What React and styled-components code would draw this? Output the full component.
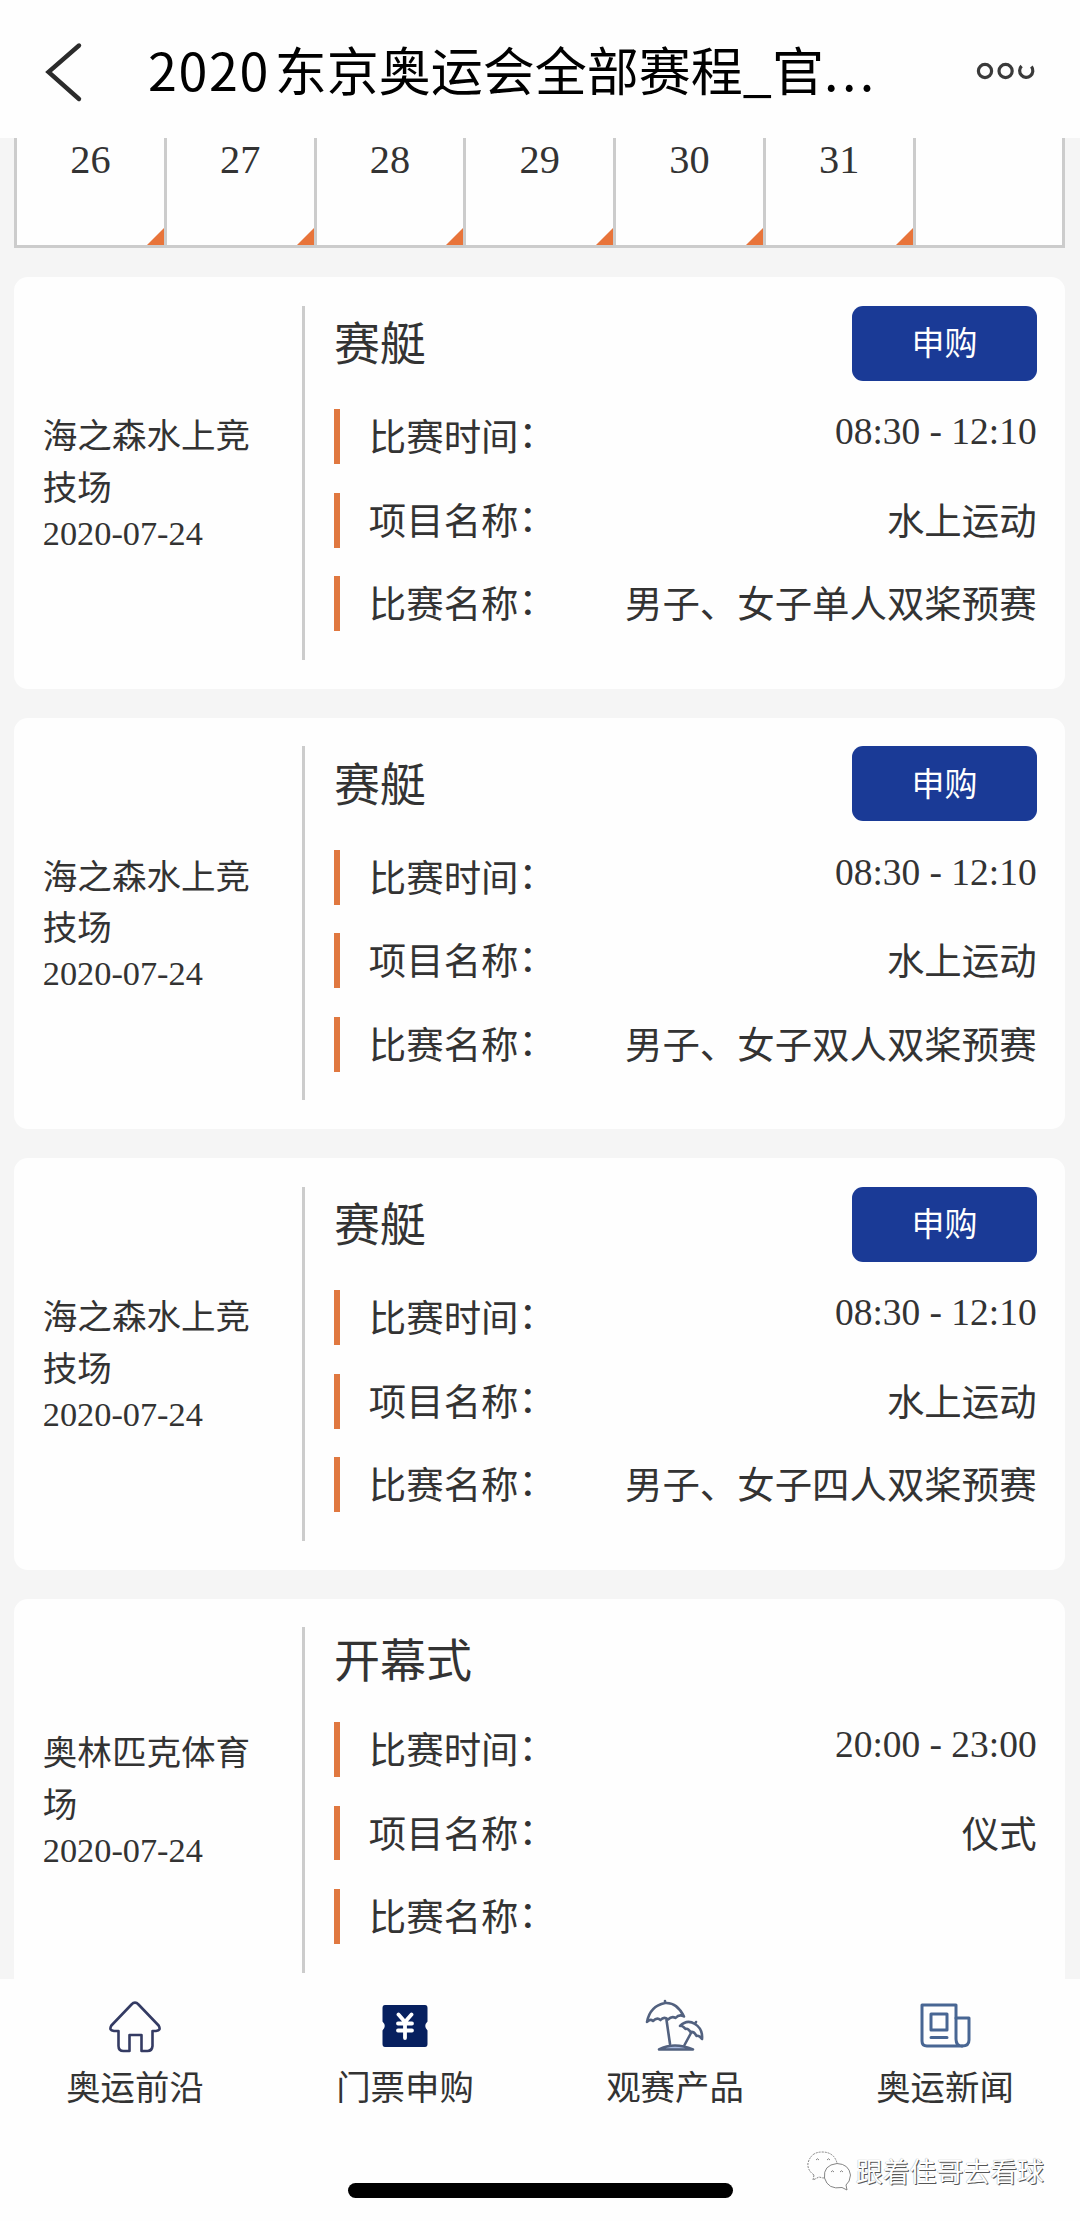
import React from "react";
import styled, { createGlobalStyle } from "styled-components";

const GlobalStyle = createGlobalStyle`
  * {
    box-sizing: border-box;
  }
  body {
    margin: 0;
    background: #ffffff;
    color: #333333;
    font-family: "Liberation Serif", "Noto Sans CJK SC", serif;
  }
`;

const Page = styled.div`
  position: relative;
  display: flex;
  flex-direction: column;
  width: 1080px;
  height: 2221px;
  overflow: hidden;
  background: #fefefe;
`;

const Header = styled.header`
  display: flex;
  align-items: center;
  flex-shrink: 0;
  height: 138px;
  padding: 6px 38px 0 44px;
  background: #fefefe;
  color: #000000;
`;

const BackIcon = styled.svg`
  width: 40px;
  height: 62px;
`;

const PageTitle = styled.h1`
  flex: 1;
  margin: 0 0 0 64px;
  padding-bottom: 7px;
  font-family: "Noto Sans CJK SC", sans-serif;
  font-size: 52px;
  font-weight: 400;
  line-height: 76px;
  white-space: nowrap;
`;

const Year = styled.span`
  margin-right: 5px;
  letter-spacing: 1.6px;
`;

const Dots = styled.span`
  letter-spacing: 3.5px;
`;

const MoreIcon = styled.svg`
  width: 66px;
  height: 24px;
`;

const Content = styled.main`
  flex: 1;
  min-height: 0;
  padding: 0 14.6px 0 14px;
  overflow: hidden;
  background: #f5f5f5;
`;

const Calendar = styled.div`
  display: grid;
  grid-template-columns: repeat(7, 1fr);
  height: 110px;
  margin-bottom: 29px;
  border: solid #cccccc;
  border-width: 0 0 3px 3px;
  background: #fefefe;
`;

const Day = styled.div`
  position: relative;
  border-right: 3px solid #cccccc;
  font-size: 40.3px;
  line-height: 44px;
  text-align: center;
`;

const Corner = styled.i`
  position: absolute;
  right: 0;
  bottom: 0;
  border-bottom: 17px solid #e8743a;
  border-left: 17px solid transparent;
`;

const Card = styled.section`
  display: flex;
  margin-bottom: 28.9px;
  padding: 28.8px;
  border-radius: 14px;
  background: #fefefe;
`;

const Place = styled.div`
  display: flex;
  flex-direction: column;
  justify-content: center;
  width: 259.4px;
  padding: 0 45px 4px 0;
  font-size: 34.56px;
`;

const Venue = styled.div`
  font-family: "Noto Sans CJK SC", sans-serif;
  line-height: 51.8px;
`;

const MatchDate = styled.div`
  font-size: 34.3px;
  line-height: 42px;
`;

const Detail = styled.div`
  flex: 1;
  padding-left: 28.8px;
  border-left: 3px solid #cccccc;
`;

const DetailHead = styled.div`
  display: flex;
  align-items: center;
  justify-content: space-between;
  min-height: 66px;
  margin-bottom: 28.8px;
`;

const Sport = styled.h2`
  margin: 0;
  padding-bottom: 5px;
  font-family: "Noto Sans CJK SC", sans-serif;
  font-size: 46px;
  font-weight: 400;
  line-height: 61px;
`;

const BuyButton = styled.button`
  width: 184.4px;
  height: 74.8px;
  padding: 0 0 4px;
  border: none;
  border-radius: 11px;
  background: #1a3a96;
  color: #ffffff;
  font-family: "Noto Sans CJK SC", sans-serif;
  font-size: 33px;
  line-height: 70px;
`;

const Row = styled.div`
  display: flex;
  justify-content: space-between;
  height: 54.7px;
  margin-bottom: 28.8px;
  padding-left: 28.8px;
  border-left: 6px solid #e07840;
  font-family: "Noto Sans CJK SC", sans-serif;
  font-size: 37.44px;
  line-height: 52px;
`;

/* the full-width colon sits a little above the baseline */
const Colon = styled.span`
  position: relative;
  top: -3px;
`;

const Time = styled.span`
  font-family: "Liberation Serif", serif;
  line-height: 45px;
`;

const TabBar = styled.nav`
  display: grid;
  grid-template-columns: repeat(4, 1fr);
  flex-shrink: 0;
  height: 184px;
  padding-top: 16px;
  background: #fefefe;
`;

const Tab = styled.a`
  display: flex;
  flex-direction: column;
  align-items: center;
  font-family: "Noto Sans CJK SC", sans-serif;
  font-size: 34.4px;
  line-height: 50px;
`;

const TabIcon = styled.svg`
  width: 64px;
  height: 64px;
  margin-bottom: 1px;
  fill: none;
  stroke: ${(props) => props.$color};
  stroke-width: 2.6;
  stroke-linecap: round;
  stroke-linejoin: round;
`;

const HomeArea = styled.div`
  display: flex;
  justify-content: center;
  flex-shrink: 0;
  height: 58px;
  padding-top: 20px;
  background: #fefefe;
`;

const HomeBar = styled.div`
  width: 385px;
  height: 15px;
  border-radius: 8px;
  background: #000000;
`;

const Watermark = styled.div`
  position: absolute;
  right: 36px;
  bottom: 30px;
  display: flex;
  align-items: center;
  gap: 4px;
  color: #ffffff;
  font-family: "Noto Sans CJK SC", sans-serif;
  font-size: 26.9px;
  line-height: 40px;
  text-shadow: 1px 1px 0 #555555, 0 0 1px #888888;
`;

const WechatIcon = styled.svg`
  width: 46px;
  height: 40px;
  fill: #fefefe;
  stroke: #777777;
  stroke-width: 0.9;
`;

const days = ["26", "27", "28", "29", "30", "31", ""];

const matches = [
  {
    sport: "赛艇",
    venue: "海之森水上竞技场",
    time: "08:30 - 12:10",
    event: "水上运动",
    name: "男子、女子单人双桨预赛",
    canBuy: true,
  },
  {
    sport: "赛艇",
    venue: "海之森水上竞技场",
    time: "08:30 - 12:10",
    event: "水上运动",
    name: "男子、女子双人双桨预赛",
    canBuy: true,
  },
  {
    sport: "赛艇",
    venue: "海之森水上竞技场",
    time: "08:30 - 12:10",
    event: "水上运动",
    name: "男子、女子四人双桨预赛",
    canBuy: true,
  },
  {
    sport: "开幕式",
    venue: "奥林匹克体育场",
    time: "20:00 - 23:00",
    event: "仪式",
    name: "",
    canBuy: false,
  },
];

function Label({ children }) {
  return (
    <span>
      {children}
      <Colon>：</Colon>
    </span>
  );
}

function MatchCard({ match }) {
  return (
    <Card>
      <Place>
        <Venue>{match.venue}</Venue>
        <MatchDate>2020-07-24</MatchDate>
      </Place>
      <Detail>
        <DetailHead>
          <Sport>{match.sport}</Sport>
          {match.canBuy && <BuyButton>申购</BuyButton>}
        </DetailHead>
        <Row>
          <Label>比赛时间</Label>
          <Time>{match.time}</Time>
        </Row>
        <Row>
          <Label>项目名称</Label>
          <span>{match.event}</span>
        </Row>
        <Row>
          <Label>比赛名称</Label>
          <span>{match.name}</span>
        </Row>
      </Detail>
    </Card>
  );
}

function App() {
  return (
    <Page>
      <GlobalStyle />
      <Header>
        <BackIcon viewBox="0 0 40 62" fill="none" stroke="#2b2b2b" strokeWidth="4.4">
          <path d="M35 4.500 L4.500 31 L35 58" strokeLinecap="round" />
        </BackIcon>
        <PageTitle>
          <Year>2020</Year>东京奥运会全部赛程_官<Dots>...</Dots>
        </PageTitle>
        <MoreIcon viewBox="0 0 66 24" fill="none" stroke="#3a3a3a" strokeWidth="3.2">
          <circle cx="9" cy="11" r="6.6" />
          <circle cx="29.6" cy="11" r="6.6" />
          <path d="M45.6 6 A6.6 6.6 0 1 0 55.4 6.6" />
        </MoreIcon>
      </Header>

      <Content>
        <Calendar>
          {days.map((day) => (
            <Day key={day}>
              {day}
              {day && <Corner />}
            </Day>
          ))}
        </Calendar>
        {matches.map((match, i) => (
          <MatchCard key={i} match={match} />
        ))}
      </Content>

      <TabBar>
        <Tab>
          <TabIcon viewBox="0 0 64 64" $color="#343b63">
            <path d="M28.5 9.5 Q32 5.8 35.5 9.5 L55.6 30.5 Q58.5 35.5 53 36 H49.5 V51 Q49 56 44.5 56 H38.5 V40 H26.5 V56 H20.5 Q15.5 56 15.5 51 V36 H11 Q5.5 35.5 8.4 30.5 Z" />
          </TabIcon>
          奥运前沿
        </Tab>
        <Tab>
          <TabIcon viewBox="0 0 64 64" $color="none">
            <path
              fill="#07205f"
              d="M12 10 H52 Q54.500 10 54.500 13 V26.500 Q50 31 54.500 35.500 V49 Q54.500 52 52 52 H12 Q9.500 52 9.500 49 V35.500 Q14 31 9.500 26.500 V13 Q9.500 10 12 10 Z"
            />
            <path
              stroke="#ffffff"
              strokeWidth="3.8"
              d="M25.500 19.500 L32 27 L38.500 19.500 M32 27 V43 M25 28.500 H39 M25 35.500 H39"
            />
          </TabIcon>
          门票申购
        </Tab>
        <Tab>
          <TabIcon viewBox="0 0 64 64" $color="#52617f">
            <path d="M22 8 Q7 11 4 27 Q7 23.500 10 26 Q14 22 17.500 25 Q21 21 25 24.500 Q29 20.500 32.500 23 Q36.500 18.500 41 21.500 Q34 7 22 8 Z M22 6 V8" />
            <path d="M23.500 25 L27 49" />
            <path d="M37 31 Q44 24 52 29 Q60 34 59 44 Q56 40 53.500 41 Q51 36 47.500 37 Q45 33 42.500 34 Q39 30 37 31 Z M53 27 L52 29 M48 38 L41.500 50" />
            <path fill="#aabbe0" d="M16 54.500 Q31 46.500 50 54.500 Z" />
          </TabIcon>
          观赛产品
        </Tab>
        <Tab>
          <TabIcon viewBox="0 0 64 64" $color="#486693">
            <g strokeWidth="3">
              <path d="M9 10 H43 V44 Q43 51 49 51 H14 Q9 51 9 46 Z" />
              <path d="M43 23 H56 V45 Q56 51 49 51" />
              <path d="M18 19 H34 V35 H18 Z M18 42.500 H34" />
            </g>
          </TabIcon>
          奥运新闻
        </Tab>
      </TabBar>

      <HomeArea>
        <HomeBar />
      </HomeArea>

      <Watermark>
        <WechatIcon viewBox="0 0 46 40">
          <path strokeDasharray="2 1" d="M8 24 Q1 19 2 12 Q5 1 16 1 Q28 1 31 12 Q31 25 17 27 L13 26 L7 29 Z" />
          <path d="M31 12.500 Q43 13 44.500 24 Q44 31 40 34 L41 39 L36 36.500 Q22 39 18.500 27 Q17 14 31 12.500 Z" />
          <path fill="none" d="M10 9 q1.500 -2.500 3 0 M21 9 q1.500 -2.500 3 0 M25 21 q1.500 -2.500 3 0 M34 21 q1.500 -2.500 3 0" />
        </WechatIcon>
        跟着佳哥去看球
      </Watermark>
    </Page>
  );
}

export default App;
